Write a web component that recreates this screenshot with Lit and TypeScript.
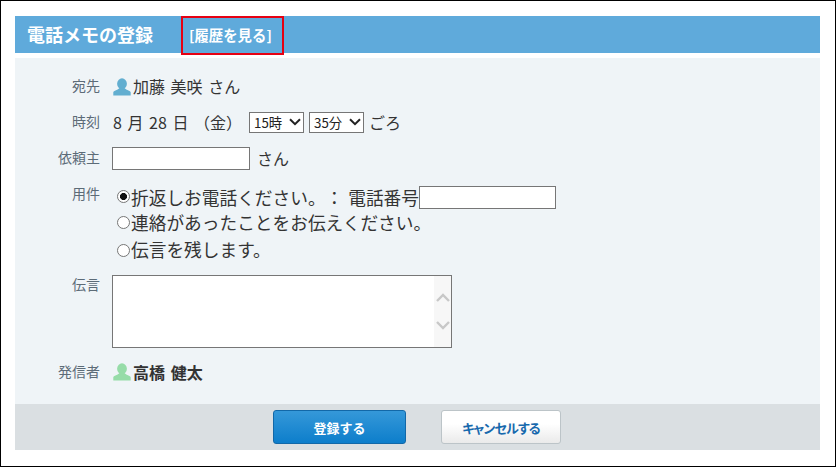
import { LitElement, html, css, svg } from "lit";
import { customElement } from "lit/decorators.js";

const person = (c: string) => html`<svg class="person" viewBox="0 0 18 18" width="18" height="18" aria-hidden="true">
  <ellipse cx="9" cy="5.7" rx="4.9" ry="5.4" fill=${c}></ellipse>
  <path d="M6.6 9.5 C6.4 11.6 0.9 12.3 0.3 14.2 L0.3 17.4 L17.7 17.4 L17.7 14.2 C17.1 12.3 11.6 11.6 11.4 9.5 Z" fill=${c}></path>
</svg>`;

const chevron = (d: string) => html`<svg width="14" height="9" viewBox="0 0 14 9" aria-hidden="true">
  ${svg`<path d=${d} fill="none" stroke="#c8c8c8" stroke-width="2.4"></path>`}
</svg>`;

const selectBox = (cls: string, text: string) => html`<span class="sel ${cls}">
  <select><option>${text}</option></select>
  <svg class="arrow" width="12" height="8" viewBox="0 0 12 8" aria-hidden="true">
    ${svg`<path d="M1 1.2 L6 6.2 L11 1.2" fill="none" stroke="#222" stroke-width="2"></path>`}
  </svg>
</span>`;

@customElement("app-root")
export class AppRoot extends LitElement {
  static styles = css`
    :host {
      display: block;
      width: 836px;
      height: 467px;
      box-sizing: border-box;
      border: 1px solid #000;
      background: #fff;
      padding: 15px 15px 0 14px;
      font-family: "Noto Sans CJK JP", "Liberation Sans", sans-serif;
      color: #333;
      overflow: hidden;
      text-spacing-trim: space-all;
    }
    .header {
      height: 37px;
      background: #5faadb;
      display: flex;
      align-items: flex-start;
      color: #fff;
      font-weight: 700;
    }
    .title {
      font-size: 18px;
      line-height: 36px;
      margin-left: 12px;
      width: 154px;
      white-space: nowrap;
    }
    .history {
      box-sizing: border-box;
      width: 103px;
      height: 39px;
      border: 2px solid #e60012;
      font-size: 14.4px;
      line-height: 33px;
      padding-left: 6px;
      white-space: nowrap;
      position: relative;
    }
    .body {
      margin-top: 5px;
      height: 346px;
      box-sizing: border-box;
      background: #eff4f7;
      padding-top: 16px;
    }
    .row {
      display: grid;
      grid-template-columns: 85px 1fr;
      column-gap: 12px;
      align-items: start;
    }
    .label {
      text-align: right;
      font-size: 14px;
      color: #5c6b77;
      line-height: 22px;
      white-space: nowrap;
    }
    .value {
      font-size: 16px;
      line-height: 24px;
      word-spacing: 2px;
      display: flex;
      align-items: center;
      white-space: nowrap;
    }
    .person { margin: 0 2px 0 1px; flex: none; }
    .r-to { height: 36px; }
    .r-to .person { margin-top: 2px; }
    .r-time { height: 36px; }
    .r-from { height: 36px; }
    .r-req { height: 93px; }
    .r-msg { height: 85px; }
    .r-msg .label { margin-top: -2px; }
    .date { margin-left: 1px; }
    .sel { position: relative; display: block; width: 55px; height: 21px; }
    select {
      appearance: none;
      -webkit-appearance: none;
      display: block;
      font-family: "Noto Sans CJK JP", sans-serif;
      font-size: 13.33px;
      line-height: 19px;
      height: 21px;
      width: 55px;
      box-sizing: border-box;
      background: #fff;
      border: 1px solid #767676;
      border-radius: 0;
      color: #222;
      padding: 0 0 0 4px;
      margin: 0;
    }
    .arrow { position: absolute; right: 3px; top: 6px; pointer-events: none; }
    .s1 { margin-left: 7px; }
    .s2 { margin-left: 5px; }
    .goro { margin-left: 5px; }
    input[type="text"] {
      box-sizing: border-box;
      height: 23px;
      background: #fff;
      border: 1px solid #767676;
      margin: 0;
      padding: 0 2px;
    }
    .i-name { width: 138px; margin-right: 7px !important; }
    .i-tel { width: 137px; }
    .options { display: flex; flex-direction: column; margin-top: 4px; }
    .opt {
      display: flex;
      align-items: center;
      height: 27px;
      font-size: 17.7px;
      word-spacing: 1px;
      white-space: nowrap;
    }
    .opt span { padding-bottom: 2px; }
    .opt:first-child { height: 23px; }
    .opt:first-child input[type="radio"] { margin-bottom: 2px; }
    .opt:last-child { height: 28px; }
    input[type="radio"] {
      appearance: none;
      -webkit-appearance: none;
      width: 13px;
      height: 13px;
      box-sizing: border-box;
      margin: 0 1px 0 5px;
      border-radius: 50%;
      border: 1px solid #767676;
      background: #fff;
      flex: none;
    }
    input[type="radio"]:checked {
      background: radial-gradient(circle, #111 0 3.2px, #fff 3.8px);
    }
    .memo {
      width: 340px;
      height: 73px;
      box-sizing: border-box;
      border: 1px solid #767676;
      background: #fff;
      display: flex;
    }
    .memo textarea {
      flex: 1;
      border: 0;
      outline: 0;
      resize: none;
      margin: 0;
      padding: 2px;
      background: #fff;
      overflow: hidden;
    }
    .bar {
      width: 17px;
      background: #f7f7f7;
      display: flex;
      flex-direction: column;
      align-items: center;
      padding-top: 17px;
      gap: 19px;
      box-sizing: border-box;
    }
    .bar svg { display: block; }
    .sender { font-weight: 700; }
    .footer {
      height: 46px;
      background: #dadfe2;
      display: flex;
      align-items: flex-start;
      padding: 6px 0 0 258px;
      box-sizing: border-box;
      gap: 35px;
    }
    button {
      height: 34px;
      font-family: inherit;
      font-size: 13px;
      font-weight: 700;
      border-radius: 3px;
      padding: 0;
      margin: 0;
    }
    .primary {
      width: 133px;
      color: #fff;
      background: linear-gradient(#3598d9, #0d7ecb);
      border: 1px solid #1268a8;
    }
    .secondary {
      width: 120px;
      color: #1769ad;
      background: linear-gradient(#fff 40%, #eaeaea);
      border: 1px solid #bcc4c8;
      font-feature-settings: "palt";
      letter-spacing: -0.85px;
    }
  `;

  render() {
    return html`
      <div class="header">
        <div class="title">電話メモの登録</div>
        <div class="history">[履歴を見る]</div>
      </div>
      <div class="body">
        <div class="row r-to">
          <div class="label">宛先</div>
          <div class="value">${person("#62aed0")}<span>加藤 美咲 さん</span></div>
        </div>
        <div class="row r-time">
          <div class="label">時刻</div>
          <div class="value">
            <span class="date">8 月 28 日 （金）</span>
            ${selectBox("s1", "15時")}
            ${selectBox("s2", "35分")}
            <span class="goro">ごろ</span>
          </div>
        </div>
        <div class="row r-from">
          <div class="label">依頼主</div>
          <div class="value"><input class="i-name" type="text" /><span>さん</span></div>
        </div>
        <div class="row r-req">
          <div class="label">用件</div>
          <div class="options">
            <label class="opt"><input type="radio" name="r" checked /><span>折返しお電話ください。： 電話番号</span><input class="i-tel" type="text" /></label>
            <label class="opt"><input type="radio" name="r" /><span>連絡があったことをお伝えください。</span></label>
            <label class="opt"><input type="radio" name="r" /><span>伝言を残します。</span></label>
          </div>
        </div>
        <div class="row r-msg">
          <div class="label">伝言</div>
          <div class="memo">
            <textarea></textarea>
            <div class="bar">${chevron("M1 8 L7 2 L13 8")}${chevron("M1 1 L7 7 L13 1")}</div>
          </div>
        </div>
        <div class="row">
          <div class="label">発信者</div>
          <div class="value sender">${person("#96dca8")}<span>高橋 健太</span></div>
        </div>
      </div>
      <div class="footer">
        <button class="primary">登録する</button>
        <button class="secondary">キャンセルする</button>
      </div>
    `;
  }
}
